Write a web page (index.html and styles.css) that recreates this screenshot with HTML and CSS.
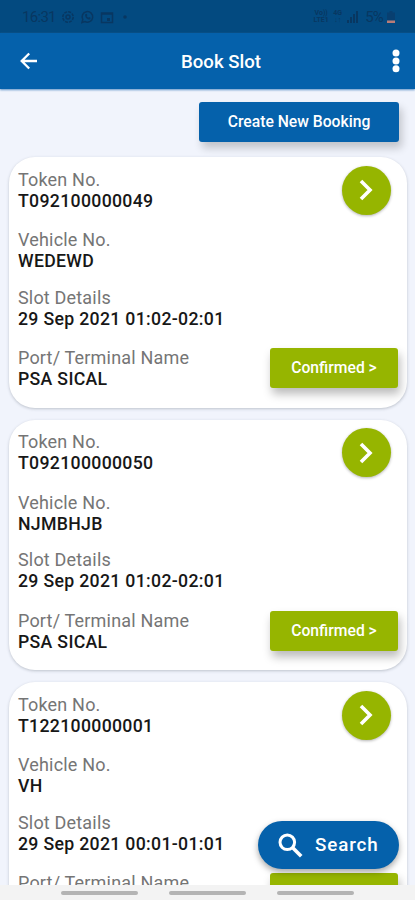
FILE: index.html
```html
<!DOCTYPE html>
<html lang="en">
<head>
<meta charset="utf-8">
<title>Book Slot</title>
<link rel="stylesheet" href="styles.css">
</head>
<body>
<div class="app">
  <div class="status">
    <span class="time">16:31</span>
    <svg class="status-icons" width="66" height="14" viewBox="0 0 66 14" fill="none" stroke="currentColor" stroke-width="1.5">
      <circle cx="7" cy="7" r="5.2" stroke-dasharray="3 1"/><circle cx="7" cy="7" r="2"/>
      <path d="M21 12.5l.8-3a5.3 5.3 0 1 1 2 2z"/><path d="M24 4.5c0 3 2 5 5 5l.8-1.8-1.8-.8-.8.8-1.5-1.5.7-.9-.7-1.5z" fill="currentColor" stroke="none"/>
      <path d="M40.5 3h11v9.5h-11zM40.5 4h11"/><path d="M46 8h3v3h-3z" fill="currentColor" stroke="none"/>
      <circle cx="64" cy="7" r="1.8" fill="currentColor" stroke="none"/>
    </svg>
    <span class="spacer"></span>
    <span class="net"><b>Vo))</b><b>LTE1</b></span>
    <span class="net small"><b>4G</b><b>↓↑</b></span>
    <svg class="signal" width="11" height="12" viewBox="0 0 11 12" fill="currentColor"><path d="M0 9h2v3H0zM3 6h2v6H3zM6 3h2v9H6zM9 0h2v12H9z"/></svg>
    <span class="pct">5%</span>
    <svg class="battery" width="8" height="13" viewBox="0 0 8 13"><path d="M2.5 0h3v1.5H8V9H0V1.5h2.5z" fill="#083f70"/><path d="M0 9.5h8V12H0z" fill="#b97c77"/></svg>
  </div>
  <header class="bar">
    <svg width="18" height="18" viewBox="0 0 18 18" fill="none" stroke="#fff" stroke-width="2.3"><path d="M17 9H2M9.2 1.5L1.7 9l7.5 7.5"/></svg>
    <h1>Book Slot</h1>
    <svg width="8" height="24" viewBox="0 0 8 24" fill="#fff"><circle cx="4" cy="4" r="3.5"/><circle cx="4" cy="12" r="3.5"/><circle cx="4" cy="19.8" r="3.5"/></svg>
  </header>
  <main class="content">
    <button class="create">Create New Booking</button>
    <article class="card">
      <dl>
        <div><dt>Token No.</dt><dd>T092100000049</dd></div>
        <div class="vehicle"><dt>Vehicle No.</dt><dd>WEDEWD</dd></div>
        <div><dt>Slot Details</dt><dd>29 Sep 2021 01:02-02:01</dd></div>
        <div><dt>Port/ Terminal Name</dt><dd>PSA SICAL</dd></div>
      </dl>
      <div class="actions">
        <button class="go"><svg width="14" height="22" viewBox="0 0 14 22" fill="none" stroke="#fff" stroke-width="3.6"><path d="M2 2l9 9-9 9"/></svg></button>
        <button class="confirmed">Confirmed &gt;</button>
      </div>
    </article>
    <article class="card">
      <dl>
        <div><dt>Token No.</dt><dd>T092100000050</dd></div>
        <div class="vehicle"><dt>Vehicle No.</dt><dd>NJMBHJB</dd></div>
        <div><dt>Slot Details</dt><dd>29 Sep 2021 01:02-02:01</dd></div>
        <div><dt>Port/ Terminal Name</dt><dd>PSA SICAL</dd></div>
      </dl>
      <div class="actions">
        <button class="go"><svg width="14" height="22" viewBox="0 0 14 22" fill="none" stroke="#fff" stroke-width="3.6"><path d="M2 2l9 9-9 9"/></svg></button>
        <button class="confirmed">Confirmed &gt;</button>
      </div>
    </article>
    <article class="card">
      <dl>
        <div><dt>Token No.</dt><dd>T122100000001</dd></div>
        <div class="vehicle"><dt>Vehicle No.</dt><dd>VH</dd></div>
        <div><dt>Slot Details</dt><dd>29 Sep 2021 00:01-01:01</dd></div>
        <div><dt>Port/ Terminal Name</dt><dd>PSA SICAL</dd></div>
      </dl>
      <div class="actions">
        <button class="go"><svg width="14" height="22" viewBox="0 0 14 22" fill="none" stroke="#fff" stroke-width="3.6"><path d="M2 2l9 9-9 9"/></svg></button>
        <button class="confirmed">Confirmed &gt;</button>
      </div>
    </article>
  </main>
  <button class="search">
    <svg width="25" height="25" viewBox="0 0 25 25" fill="none" stroke="#fff" stroke-width="3"><circle cx="9.3" cy="9.3" r="7.3"/><path d="M14.5 14.5l8.7 8.7" stroke-width="3.6"/></svg>
    <span>Search</span>
  </button>
  <nav class="gestures"><i></i><i></i><i></i></nav>
</div>
</body>
</html>
```
FILE: styles.css
```css
* { box-sizing: border-box; }
body { margin: 0; font-family: Roboto, "Liberation Sans", sans-serif; }
button { border: 0; padding: 0; color: #fff; font: 500 15.7px/20px Roboto, sans-serif; }
.app {
  position: relative;
  display: flex;
  flex-direction: column;
  width: 415px;
  height: 900px;
  overflow: hidden;
  background: #f1f4fc;
}
.status {
  flex: none;
  display: flex;
  align-items: center;
  height: 33px;
  padding: 0 20px 0 22px;
  background: #034a80;
  color: #083761;
}
.time { width: 39px; font-size: 15px; letter-spacing: -.7px; }
.spacer { flex: 1; }
.net { display: flex; flex-direction: column; align-items: center; width: 18px; font-size: 7px; line-height: 7px; }
.net.small { width: 15px; }
.signal { margin: 0 7px 0 2px; }
.pct { font-size: 15px; margin-right: 4px; letter-spacing: -.8px; }
.battery { margin-top: 2px; }
.bar {
  flex: none;
  position: relative;
  z-index: 1;
  display: flex;
  align-items: center;
  justify-content: space-between;
  height: 56px;
  padding: 0 15px 0 20px;
  background: #0561ab;
  box-shadow: 0 1px 2px #5e91c6;
}
h1 { margin: 0; padding: 1px 0 0 12px; color: #fff; font-size: 18.6px; font-weight: 500; line-height: 24px; }
.content {
  flex: 1;
  min-height: 0;
  display: flex;
  flex-direction: column;
  padding: 13px 8.5px 0 9px;
  overflow: hidden;
}
.create {
  flex: none;
  align-self: flex-end;
  width: 200px;
  height: 40px;
  margin: 0 7.5px 15px 0;
  border-radius: 3px;
  background: #0561ab;
  box-shadow: 3px 6px 9px rgba(0,0,0,.2);
}
.card {
  flex: none;
  display: flex;
  justify-content: space-between;
  height: 250.5px;
  margin-bottom: 12px;
  padding: 8.5px 8.5px 19.5px 9px;
  border-radius: 26px;
  background: #fff;
  box-shadow: 0 1px 3px rgba(70,80,95,.3);
}
dl { margin: 0; padding-top: 3px; }
dl > div { margin-bottom: 18.5px; }
dl > .vehicle { margin-bottom: 15.5px; }
dt, dd { margin: 0; height: 21px; line-height: 21px; white-space: nowrap; }
dt { color: #757575; font-size: 18px; letter-spacing: .18px; }
dd { color: #171717; font-size: 17.7px; font-weight: 500; line-height: 23px; letter-spacing: .31px; }
.actions { display: flex; flex-direction: column; justify-content: space-between; align-items: flex-end; }
.go {
  display: flex;
  align-items: center;
  justify-content: center;
  width: 49px;
  height: 49px;
  margin-right: 7.5px;
  border-radius: 50%;
  background: #96b500;
  box-shadow: 0 1px 3px rgba(0,0,0,.3);
}
.confirmed {
  width: 128px;
  height: 40px;
  border-radius: 3px;
  background: #96b500;
  box-shadow: 2px 6px 10px rgba(0,0,0,.27);
}
.search {
  position: absolute;
  right: 16px;
  bottom: 31px;
  display: flex;
  align-items: center;
  gap: 12px;
  width: 141px;
  height: 48px;
  padding-left: 20px;
  border-radius: 24px;
  background: #0561ab;
  font-size: 18.8px;
  letter-spacing: .9px;
  box-shadow: 0 3px 6px rgba(0,0,0,.35);
}
.gestures {
  flex: none;
  display: flex;
  justify-content: center;
  gap: 31px;
  height: 15px;
  padding-top: 6px;
  background: #f3f3f3;
}
.gestures i { width: 77px; height: 4px; border-radius: 2px; background: #b4b4b4; }
```
